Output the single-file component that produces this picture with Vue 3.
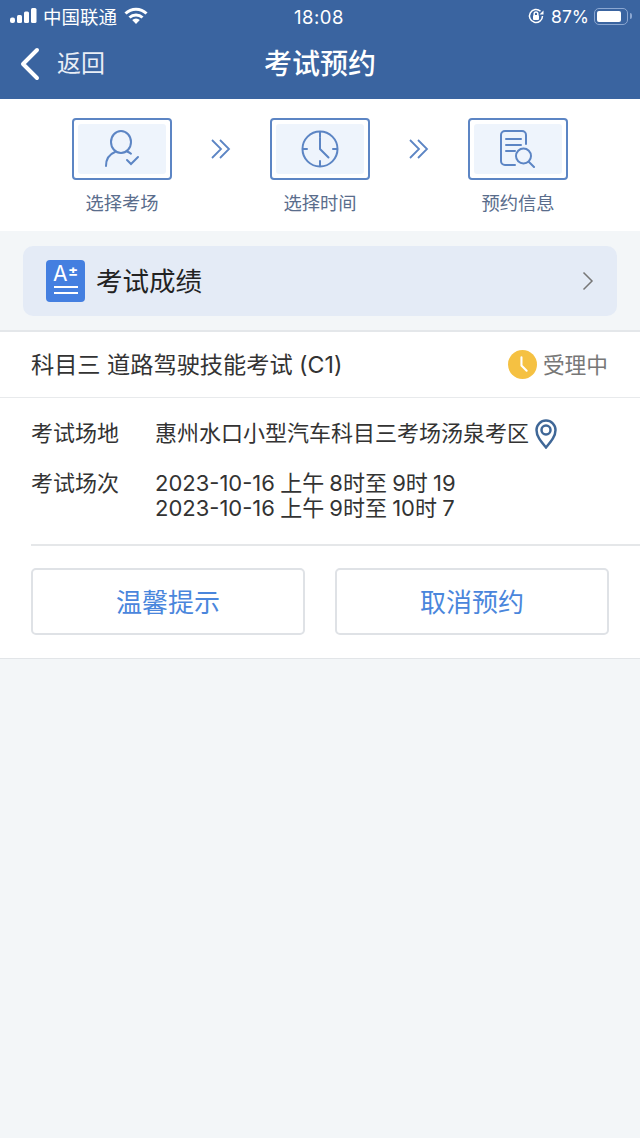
<script setup>
const steps = [
  { label: '选择考场', icon: 'user' },
  { label: '选择时间', icon: 'clock' },
  { label: '预约信息', icon: 'doc' }
]
</script>

<template>
  <div class="page">
    <div class="top">
      <div class="status">
        <div class="status-left">
          <svg width="28" height="16" viewBox="0 0 28 16" class="signal">
            <rect x="0" y="9.500" width="5" height="5.500" rx="2" />
            <rect x="7" y="7" width="5" height="8" rx="1.500" />
            <rect x="14" y="3.500" width="5" height="11.500" rx="1.500" />
            <rect x="21" y="0" width="5.500" height="15" rx="1.500" />
          </svg>
          <span class="carrier">中国联通</span>
          <svg width="24" height="18" viewBox="0 0 24 18" class="wifi">
            <path d="M1.500 6.500a15 15 0 0 1 21 0" />
            <path d="M5.500 10.500a9.500 9.500 0 0 1 13 0" />
            <path class="wifi-dot" d="M12 17l-3.800-4a5.500 5.500 0 0 1 7.600 0z" />
          </svg>
        </div>
        <span class="time">18:08</span>
        <div class="status-right">
          <svg width="18" height="18" viewBox="0 0 18 18" class="lock">
            <path d="M15.500 9a6.500 6.500 0 1 1-2-4.700" />
            <path class="fill" d="M16.500 3.500v4h-4z" />
            <rect class="fill" x="6" y="8" width="6" height="5" rx="1" />
            <path d="M7.200 8V6.800a1.800 1.800 0 0 1 3.600 0V8" />
          </svg>
          <span class="battery-text">87%</span>
          <div class="battery">
            <div class="battery-level"></div>
          </div>
          <div class="battery-cap"></div>
        </div>
      </div>
      <div class="nav">
        <div class="back">
          <svg width="22" height="34" viewBox="0 0 22 34">
            <path d="M18 3L4 17l14 14" />
          </svg>
          <span>返回</span>
        </div>
        <div class="nav-title">考试预约</div>
      </div>
    </div>

    <div class="steps">
      <template v-for="(s, i) in steps" :key="s.label">
        <div class="step">
          <div class="step-box">
            <div class="step-inner">
              <svg v-if="s.icon === 'user'" width="36" height="38" viewBox="0 0 36 38">
                <ellipse cx="17" cy="12" rx="10" ry="11" />
                <path d="M2 36c0-7 4-12 9-14M23 21.500c1.500.5 3 1.300 4 2.200" />
                <path d="M23 30l4 4 7-7" />
              </svg>
              <svg v-if="s.icon === 'clock'" width="38" height="38" viewBox="0 0 38 38">
                <circle cx="19" cy="19" r="17.500" />
                <path d="M19 2v5M19 31v5M2 19h4M32 19h4M19 8v11l8.500 8.500" />
              </svg>
              <svg v-if="s.icon === 'doc'" width="38" height="38" viewBox="0 0 38 38">
                <path d="M16 35H6a4 4 0 0 1-4-4V5a4 4 0 0 1 4-4h17a4 4 0 0 1 4 4v9" />
                <path d="M7 9h15M7 15h15M7 21h9" />
                <circle cx="24.500" cy="26" r="7.500" />
                <path d="M30 32l5 5" />
              </svg>
            </div>
          </div>
          <div class="step-label">{{ s.label }}</div>
        </div>
        <svg v-if="i < steps.length - 1" class="chev" width="20" height="20" viewBox="0 0 20 20">
          <path d="M1 1l9 9-9 9M9 1l9 9-9 9" />
        </svg>
      </template>
    </div>

    <div class="score-wrap">
      <div class="score">
        <div class="score-icon">
          <span class="grade">A</span>
          <span class="plus">±</span>
          <i class="line line-a"></i>
          <i class="line line-b"></i>
        </div>
        <span class="score-title">考试成绩</span>
        <svg class="score-arrow" width="12" height="20" viewBox="0 0 12 20">
          <path d="M1.500 1.500L10 10l-8.500 8.500" />
        </svg>
      </div>
    </div>

    <div class="card">
      <div class="card-head">
        <span class="subject">科目三 道路驾驶技能考试 (C1)</span>
        <div class="state">
          <svg width="29" height="29" viewBox="0 0 28 28">
            <circle cx="14" cy="14" r="14" fill="#f5c142" />
            <path d="M13 7v8l5 5" fill="none" stroke="#fff" stroke-width="2" stroke-linecap="round" />
          </svg>
          <span>受理中</span>
        </div>
      </div>
      <div class="info">
        <div class="row">
          <span class="row-label">考试场地</span>
          <div class="place">
            <span>惠州水口小型汽车科目三考场汤泉考区</span>
            <svg width="22" height="30" viewBox="0 0 22 30">
              <path d="M11 28.500C6 22.500 1.500 17.500 1.500 11a9.500 9.500 0 0 1 19 0c0 6.500-4.500 11.500-9.500 17.500z" />
              <circle cx="11" cy="11" r="4.500" />
            </svg>
          </div>
        </div>
        <div class="row row-times">
          <span class="row-label">考试场次</span>
          <div class="times">
            <div>2023-10-16 上午 8时至 9时 19</div>
            <div>2023-10-16 上午 9时至 10时 7</div>
          </div>
        </div>
      </div>
      <div class="actions">
        <button class="btn">温馨提示</button>
        <button class="btn">取消预约</button>
      </div>
    </div>
  </div>
</template>

<style scoped>
.page {
  width: 640px;
  height: 1138px;
  background: #f3f6f8;
  font-family: "Inter", "Noto Sans CJK SC", sans-serif;
  overflow: hidden;
}
.top {
  height: 99px;
  background: #3a64a0;
  color: #fff;
}
.status {
  height: 32px;
  display: flex;
  align-items: center;
  justify-content: space-between;
  padding: 0 8px 0 10px;
  position: relative;
  font-size: 18px;
}
.status-left, .status-right {
  display: flex;
  align-items: center;
}
.signal rect { fill: #fff; }
.carrier {
  margin-left: 5px;
  font-size: 18.500px;
}
.wifi {
  margin-left: 7px;
  margin-top: -1px;
}
.wifi path {
  fill: none;
  stroke: #fff;
  stroke-width: 3;
}
.wifi .wifi-dot {
  fill: #fff;
  stroke: none;
}
.time {
  position: absolute;
  left: 294px;
  top: 6px;
  font-size: 18.500px;
  line-height: 22px;
  letter-spacing: 0.500px;
}
.lock path {
  fill: none;
  stroke: #fff;
  stroke-width: 1.500;
}
.lock .fill { fill: #fff; stroke: none; }
.battery-text {
  margin-left: 6px;
  font-size: 17.500px;
}
.battery {
  width: 34px;
  height: 17px;
  margin-left: 5px;
  border: 1.500px solid #8ba7d1;
  border-radius: 5px;
  padding: 2px;
  box-sizing: border-box;
}
.battery-level {
  width: 87%;
  height: 100%;
  background: #fff;
  border-radius: 2px;
}
.battery-cap {
  width: 2px;
  height: 6px;
  margin-left: 2px;
  background: #8ba7d1;
  border-radius: 0 2px 2px 0;
}
.nav {
  height: 67px;
  position: relative;
  display: flex;
  justify-content: center;
}
.back {
  position: absolute;
  left: 19px;
  top: 14px;
  display: flex;
  align-items: center;
  height: 36px;
  font-size: 24px;
  line-height: 32px;
  color: #e9eef6;
}
.back svg path {
  fill: none;
  stroke: #fff;
  stroke-width: 4;
  stroke-linecap: round;
  stroke-linejoin: round;
}
.back span {
  margin-left: 16px;
  margin-top: -1px;
}
.nav-title {
  margin-top: 12px;
  font-size: 28px;
  line-height: 40px;
  font-weight: 500;
}
.steps {
  height: 132px;
  background: #fff;
  display: flex;
  justify-content: center;
  align-items: flex-start;
  padding-top: 19px;
  box-sizing: border-box;
}
.step {
  width: 100px;
  display: flex;
  flex-direction: column;
  align-items: center;
}
.step-box {
  width: 100px;
  height: 62px;
  border: 2px solid #5c85c4;
  border-radius: 4px;
  padding: 4px;
  box-sizing: border-box;
}
.step-inner {
  height: 100%;
  background: #eef4fc;
  border-radius: 3px;
  display: flex;
  align-items: center;
  justify-content: center;
}
.step-inner svg {
  fill: none;
  stroke: #5c85c4;
  stroke-width: 2;
  stroke-linecap: round;
}
.step-label {
  margin-top: 10px;
  font-size: 18.300px;
  line-height: 26px;
  color: #5a6d8c;
}
.chev {
  margin: 21px 39px 0;
  flex: none;
}
.chev path {
  fill: none;
  stroke: #5c85c4;
  stroke-width: 1.800;
}
.score-wrap {
  height: 101px;
  padding: 15px 23px 0;
  box-sizing: border-box;
  border-bottom: 2px solid #e4e7ea;
}
.score {
  height: 70px;
  background: #e4ebf6;
  border-radius: 10px;
  display: flex;
  align-items: center;
  padding: 0 23px 0 23px;
}
.score-icon {
  position: relative;
  width: 39px;
  height: 42px;
  background: #447fe0;
  border-radius: 4px;
  color: #fff;
  flex: none;
}
.grade {
  position: absolute;
  left: 7px;
  top: 2px;
  font-size: 21px;
  line-height: 24px;
}
.plus {
  position: absolute;
  left: 22px;
  top: 1px;
  font-size: 15px;
  font-weight: 700;
  line-height: 20px;
}
.line {
  position: absolute;
  left: 8px;
  right: 7px;
  height: 2px;
  background: #fff;
}
.line-a { top: 26px; }
.line-b { top: 32px; }
.score-title {
  margin-left: 11px;
  margin-top: -4px;
  font-size: 26.500px;
  color: #222;
}
.score-arrow {
  margin-left: auto;
}
.score-arrow path {
  fill: none;
  stroke: #777;
  stroke-width: 1.500;
}
.card {
  background: #fff;
  height: 327px;
  border-bottom: 1px solid #e2e5e8;
  box-sizing: border-box;
}
.card-head {
  height: 65px;
  padding: 0 32px 0 31px;
  display: flex;
  align-items: center;
  justify-content: space-between;
  font-size: 23.200px;
  color: #333;
  border-bottom: 1px solid #e8eaec;
}
.subject {
  margin-top: -3px;
}
.state {
  display: flex;
  align-items: center;
  font-size: 21.700px;
  color: #777;
}
.state span {
  margin-left: 6px;
  margin-top: -3px;
}
.info {
  margin-left: 31px;
  height: 148px;
  padding-top: 17px;
  box-sizing: border-box;
  border-bottom: 2px solid #e5e7e9;
  font-size: 22px;
  color: #333;
}
.row {
  display: flex;
  line-height: 36px;
}
.row-label {
  width: 124px;
  flex: none;
}
.place {
  display: flex;
  align-items: center;
}
.place svg {
  margin: 2px 0 0 6px;
  fill: none;
  stroke: #3f6797;
  stroke-width: 2.500;
}
.row-times { margin-top: 14px; }
.times {
  line-height: 25px;
  padding-top: 6px;
  word-spacing: -1px;
}
.actions {
  display: flex;
  justify-content: space-between;
  padding: 22px 31px 0;
}
.btn {
  width: 274px;
  height: 67px;
  padding: 0 0 2px;
  background: #fff;
  border: 2px solid #dfe2e6;
  border-radius: 5px;
  font-family: inherit;
  font-size: 26px;
  color: #4a86dc;
  cursor: pointer;
}
</style>
